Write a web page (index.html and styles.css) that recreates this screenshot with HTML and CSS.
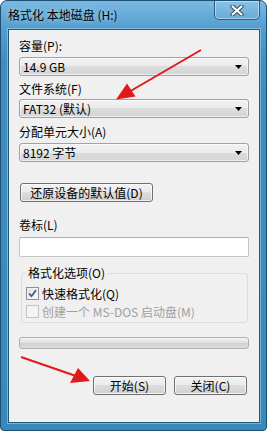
FILE: index.html
```html
<!DOCTYPE html>
<html>
<head>
<meta charset="utf-8">
<link rel="stylesheet" href="styles.css">
</head>
<body>
<div class="window">
  <div class="titlebar">
    <span class="title">格式化 本地磁盘 (H:)</span>
    <div class="close">
      <svg width="14" height="11" viewBox="0 0 14 11">
        <path d="M2.5 1.5 L11.5 9.5 M11.5 1.5 L2.5 9.5" stroke="#3a4a5a" stroke-width="4.2" stroke-linecap="round"/>
        <path d="M2.5 1.5 L11.5 9.5 M11.5 1.5 L2.5 9.5" stroke="#ffffff" stroke-width="2.2" stroke-linecap="round"/>
      </svg>
    </div>
  </div>
  <div class="client">
    <div class="label">容量(P):</div>
    <div class="combo c1"><span>14.9 GB</span><svg class="arr" width="7" height="4" viewBox="0 0 7 4"><polygon points="0,0 7,0 3.5,4" fill="#000"/></svg></div>

    <div class="label l2">文件系统(F)</div>
    <div class="combo c2"><span>FAT32 (默认)</span><svg class="arr" width="7" height="4" viewBox="0 0 7 4"><polygon points="0,0 7,0 3.5,4" fill="#000"/></svg></div>

    <div class="label l3">分配单元大小(A)</div>
    <div class="combo c3"><span>8192 字节</span><svg class="arr" width="7" height="4" viewBox="0 0 7 4"><polygon points="0,0 7,0 3.5,4" fill="#000"/></svg></div>

    <div class="btn restore">还原设备的默认值(D)</div>

    <div class="label l4">卷标(L)</div>
    <div class="input"></div>

    <fieldset class="group">
      <legend>格式化选项(O)</legend>
      <div class="row">
        <span class="cb checked"><svg width="9" height="9" viewBox="0 0 9 9"><path d="M1 4.5 L3.5 7.2 L8 1.2" stroke="#3b5a9a" stroke-width="1.8" fill="none"/></svg></span>
        <span>快速格式化(Q)</span>
      </div>
      <div class="row disabled">
        <span class="cb dis"></span>
        <span>创建一个 MS-DOS 启动盘(M)</span>
      </div>
    </fieldset>

    <div class="progress"></div>

    <div class="actions">
      <div class="btn act">开始(S)</div>
      <div class="btn act">关闭(C)</div>
    </div>
  </div>
</div>
<svg class="annot" width="267" height="431" viewBox="0 0 267 431">
  <line x1="201" y1="50" x2="128" y2="92.5" stroke="#e0191b" stroke-width="2"/>
  <polygon points="116,99.5 135.5,96.5 127,83.5" fill="#e0191b"/>
  <line x1="21" y1="357" x2="76" y2="376" stroke="#e0191b" stroke-width="2"/>
  <polygon points="90,381 70,383 78,368" fill="#e0191b"/>
</svg>
</body>
</html>
```

FILE: styles.css
```css
* { box-sizing: border-box; }
html, body { margin: 0; padding: 0; }
body {
  position: relative;
  width: 267px;
  height: 431px;
  overflow: hidden;
  background: #ffffff;
  font-family: "Noto Sans CJK SC", sans-serif;
  font-size: 12px;
  color: #000;
}
.window {
  width: 267px;
  height: 431px;
  border: 1px solid #1c4f72;
  border-radius: 7px 7px 4px 4px;
  background: linear-gradient(#7ab9e1, #559fd0 26px, #3f8dc3 60px, #3888be);
  display: flex;
  flex-direction: column;
}
.titlebar {
  height: 28px;
  display: flex;
  justify-content: space-between;
  align-items: flex-start;
}
.title {
  margin: 7px 0 0 7px;
  line-height: 14px;
  font-size: 12px;
  color: #000;
  text-shadow: 0 0 5px rgba(255,255,255,0.6);
}
.close {
  width: 46px;
  height: 19px;
  margin-right: 6px;
  border: 1px solid #2a5a7e;
  border-top: none;
  border-radius: 0 0 5px 5px;
  box-shadow: inset 0 0 0 1px rgba(255,255,255,0.45);
  background: linear-gradient(rgba(255,255,255,0.12), rgba(255,255,255,0.04));
  display: flex;
  align-items: center;
  justify-content: center;
}
.client {
  margin: 0 6px 0 7px;
  height: 394px;
  background: #f0f0f0;
  border: 1px solid #25587a;
  box-shadow: 0 0 0 1px rgba(170,215,240,0.55);
  padding: 9px 10px 0 10px;
  display: flex;
  flex-direction: column;
}
.label { line-height: 14px; height: 14px; white-space: nowrap; }
.l2 { margin-top: 6px; }
.l3 { margin-top: 7px; }
.l4 { margin-top: 16px; }
.combo {
  height: 19px;
  border: 1px solid #a2a2a2;
  border-radius: 3px;
  background: linear-gradient(#f2f2f2, #ebebeb 50%, #dddddd 50%, #d5d5d5);
  box-shadow: inset 0 0 0 1px rgba(255,255,255,0.6);
  display: flex;
  align-items: center;
  justify-content: space-between;
  padding: 0 6px 0 3px;
  line-height: 14px;
}
.c1 { margin-top: 4px; }
.c2 { margin-top: 3px; }
.c3 { margin-top: 4px; }
.arr { display: block; }
.btn {
  height: 19px;
  border: 1px solid #707070;
  border-radius: 3px;
  background: linear-gradient(#f2f2f2, #ebebeb 50%, #dddddd 50%, #cfcfcf);
  box-shadow: inset 0 0 0 1px rgba(255,255,255,0.7);
  display: flex;
  align-items: center;
  justify-content: center;
  line-height: 14px;
  white-space: nowrap;
}
.restore { margin-top: 21px; width: 133px; margin-left: 1px; }
.input {
  margin-top: 5px;
  height: 20px;
  background: #fff;
  border: 1px solid #c5c5c5;
  border-top-color: #abadb3;
  border-radius: 2px;
}
.group {
  margin: 9px 1px 0 2px;
  padding: 6px 4px 3px 4px;
  border: 1px solid #d5dfe5;
  border-radius: 3px;
  min-width: 0;
}
.group legend {
  padding: 0 2px;
  line-height: 14px;
}
.row {
  display: flex;
  align-items: center;
  gap: 3px;
  height: 15px;
  line-height: 14px;
  white-space: nowrap;
}
.row + .row { margin-top: 3px; }
.row.disabled { color: #a0a0a0; }
.cb {
  width: 13px;
  height: 13px;
  border: 1px solid #8e8f8f;
  background: linear-gradient(135deg, #dcdcdc, #ffffff);
  box-shadow: inset 0 0 0 1px #f4f4f4;
  display: flex;
  align-items: center;
  justify-content: center;
  flex: none;
}
.cb.dis {
  border-color: #c4c4c4;
  background: #f4f4f4;
  box-shadow: none;
}
.progress {
  margin-top: 14px;
  height: 12px;
  border: 1px solid #b0b0b0;
  border-radius: 3px;
  background: linear-gradient(#f4f4f4, #e0e0e0 45%, #d2d2d2 55%, #dcdcdc);
}
.actions {
  margin-top: 27px;
  display: flex;
  justify-content: flex-end;
  gap: 8px;
  padding-right: 2px;
}
.act { width: 73px; }
.annot { position: absolute; left: 0; top: 0; }
```
